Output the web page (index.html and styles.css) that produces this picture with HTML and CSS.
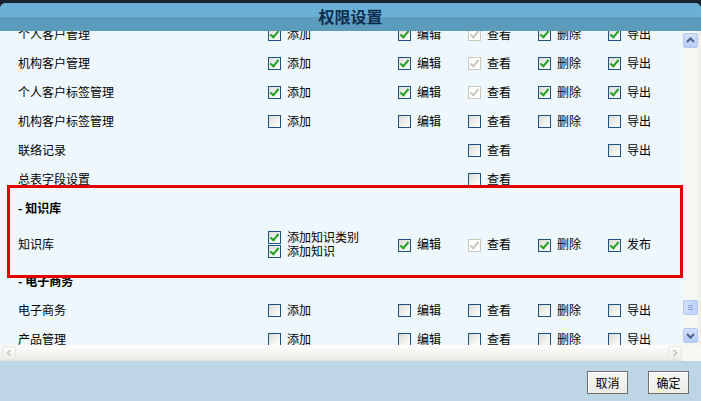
FILE: index.html
```html
<!DOCTYPE html>
<html lang="zh-CN">
<head>
  <meta charset="UTF-8" />
  <title>权限设置</title>
  <link rel="stylesheet" href="styles.css">
</head>
<body>
  <div class="dialog">
    <div class="titlebar">权限设置</div>
    <div class="main">
      <div class="viewport">
        <div class="perm-list">
          <div class="row">
            <span class="name">个人客户管理</span>
            <label class="opt"><span class="cb on"></span>添加</label>
            <label class="opt"><span class="cb on"></span>编辑</label>
            <label class="opt"><span class="cb on dis"></span>查看</label>
            <label class="opt"><span class="cb on"></span>删除</label>
            <label class="opt"><span class="cb on"></span>导出</label>
          </div>
          <div class="row">
            <span class="name">机构客户管理</span>
            <label class="opt"><span class="cb on"></span>添加</label>
            <label class="opt"><span class="cb on"></span>编辑</label>
            <label class="opt"><span class="cb on dis"></span>查看</label>
            <label class="opt"><span class="cb on"></span>删除</label>
            <label class="opt"><span class="cb on"></span>导出</label>
          </div>
          <div class="row">
            <span class="name">个人客户标签管理</span>
            <label class="opt"><span class="cb on"></span>添加</label>
            <label class="opt"><span class="cb on"></span>编辑</label>
            <label class="opt"><span class="cb on dis"></span>查看</label>
            <label class="opt"><span class="cb on"></span>删除</label>
            <label class="opt"><span class="cb on"></span>导出</label>
          </div>
          <div class="row">
            <span class="name">机构客户标签管理</span>
            <label class="opt"><span class="cb"></span>添加</label>
            <label class="opt"><span class="cb"></span>编辑</label>
            <label class="opt"><span class="cb"></span>查看</label>
            <label class="opt"><span class="cb"></span>删除</label>
            <label class="opt"><span class="cb"></span>导出</label>
          </div>
          <div class="row">
            <span class="name">联络记录</span>
            <span></span>
            <span></span>
            <label class="opt"><span class="cb"></span>查看</label>
            <span></span>
            <label class="opt"><span class="cb"></span>导出</label>
          </div>
          <div class="row">
            <span class="name">总表字段设置</span>
            <span></span>
            <span></span>
            <label class="opt"><span class="cb"></span>查看</label>
          </div>
          <div class="row group">- 知识库</div>
          <div class="row tall">
            <span class="name">知识库</span>
            <div class="stack">
              <label class="opt"><span class="cb on"></span>添加知识类别</label>
              <label class="opt"><span class="cb on"></span>添加知识</label>
            </div>
            <label class="opt"><span class="cb on"></span>编辑</label>
            <label class="opt"><span class="cb on dis"></span>查看</label>
            <label class="opt"><span class="cb on"></span>删除</label>
            <label class="opt"><span class="cb on"></span>发布</label>
          </div>
          <div class="row group">- 电子商务</div>
          <div class="row">
            <span class="name">电子商务</span>
            <label class="opt"><span class="cb"></span>添加</label>
            <label class="opt"><span class="cb"></span>编辑</label>
            <label class="opt"><span class="cb"></span>查看</label>
            <label class="opt"><span class="cb"></span>删除</label>
            <label class="opt"><span class="cb"></span>导出</label>
          </div>
          <div class="row">
            <span class="name">产品管理</span>
            <label class="opt"><span class="cb"></span>添加</label>
            <label class="opt"><span class="cb"></span>编辑</label>
            <label class="opt"><span class="cb"></span>查看</label>
            <label class="opt"><span class="cb"></span>删除</label>
            <label class="opt"><span class="cb"></span>导出</label>
          </div>
        </div>
      </div>
      <div class="vscroll">
        <div class="sb-btn">
          <svg width="13" height="13" viewBox="0 0 13 13"><path d="M3 8 L6.5 4.5 L10 8" fill="none" stroke="#4d6185" stroke-width="2"/></svg>
        </div>
        <div class="track">
          <div class="thumb">
            <svg width="13" height="13" viewBox="0 0 13 13"><path d="M4 4.5h5M4 6.5h5M4 8.5h5" stroke="#8ea3d6" stroke-width="1"/></svg>
          </div>
        </div>
        <div class="sb-btn">
          <svg width="13" height="13" viewBox="0 0 13 13"><path d="M3 5 L6.5 8.5 L10 5" fill="none" stroke="#4d6185" stroke-width="2"/></svg>
        </div>
      </div>
    </div>
    <div class="hscroll">
      <div class="sb-btn off">
        <svg width="12" height="12" viewBox="0 0 12 12"><path d="M7.5 3 L4.5 6 L7.5 9" fill="none" stroke="#c4c4bd" stroke-width="1.6"/></svg>
      </div>
      <div class="htrack"></div>
      <div class="sb-btn off">
        <svg width="12" height="12" viewBox="0 0 12 12"><path d="M4.5 3 L7.5 6 L4.5 9" fill="none" stroke="#c4c4bd" stroke-width="1.6"/></svg>
      </div>
      <div class="corner"></div>
    </div>
    <div class="footer">
      <button class="btn">取消</button>
      <button class="btn">确定</button>
    </div>
    <div class="mark"></div>
  </div>
</body>
</html>
```

FILE: styles.css
```css
* {
  margin: 0;
  padding: 0;
  box-sizing: border-box;
}
html, body {
  height: 100%;
  overflow: hidden;
}
body {
  background: #16232f;
  font-family: "Noto Sans CJK SC", sans-serif;
  font-size: 12px;
  color: #000;
}
.dialog {
  position: relative;
  width: 701px;
  height: 398px;
  margin-top: 3px;
  display: flex;
  flex-direction: column;
  background: #bdd5e4;
  border-radius: 6px 6px 0 0;
  overflow: hidden;
}
.titlebar {
  height: 28px;
  flex: 0 0 28px;
  background: linear-gradient(to bottom, #6aafd5 0, #6aafd5 50%, #5b9bbc 50%, #5b9bbc 100%);
  color: #0c2d4f;
  font-size: 16px;
  font-weight: bold;
  text-align: center;
  line-height: 26px;
}
.main {
  display: flex;
  height: 314px;
  flex: 0 0 314px;
}
.viewport {
  flex: 1;
  overflow: hidden;
  background: #eef7fd;
}
.perm-list {
  margin-top: -12px;
}
.row {
  display: grid;
  grid-template-columns: 250px 130px 70px 70px 70px 70px;
  align-items: center;
  height: 29px;
  padding-left: 18px;
  line-height: 14px;
}
.row.tall {
  height: 44px;
}
.row.group {
  display: block;
  line-height: 29px;
  font-weight: bold;
}
.stack {
  display: flex;
  flex-direction: column;
}
.opt {
  display: flex;
  align-items: center;
  gap: 6px;
  white-space: nowrap;
}
.cb {
  position: relative;
  width: 13px;
  height: 13px;
  flex: 0 0 13px;
  margin-top: 2px;
  border: 1px solid #1c5180;
  background: linear-gradient(135deg, #dcdcd6, #ffffff);
}
.stack .cb {
  margin-top: 1px;
}
.cb.on::after {
  content: '';
  position: absolute;
  left: 3px;
  top: 0;
  width: 3px;
  height: 7px;
  border: solid #21a121;
  border-width: 0 2px 2px 0;
  transform: rotate(40deg);
}
.cb.dis {
  border-color: #cac8bb;
  background: #fff;
}
.cb.dis::after {
  border-color: #cac8bb;
}
.vscroll {
  width: 18px;
  flex: 0 0 18px;
  display: flex;
  flex-direction: column;
  align-items: center;
  padding: 2px 0;
  background: #f7f7f3;
  border-right: 3px solid #eeeeea;
}
.sb-btn {
  width: 15px;
  height: 15px;
  flex: 0 0 15px;
  display: flex;
  align-items: center;
  justify-content: center;
  border: 1px solid #b4c8f2;
  border-radius: 2px;
  background: linear-gradient(to bottom, #d2e0fc, #b8ccf7);
}
.sb-btn.off {
  width: 14px;
  height: 14px;
  flex: 0 0 14px;
  border-color: #e6e5de;
  background: linear-gradient(to bottom, #fbfbf8, #efeee8);
}
.track {
  flex: 1;
  display: flex;
  flex-direction: column;
  justify-content: flex-end;
  padding-bottom: 13px;
}
.thumb {
  width: 15px;
  height: 15px;
  display: flex;
  align-items: center;
  justify-content: center;
  border: 1px solid #b4c8f2;
  border-radius: 2px;
  background: linear-gradient(to right, #d2e0fc, #bed0f8);
}
.hscroll {
  height: 16px;
  flex: 0 0 16px;
  display: flex;
  align-items: center;
  padding-left: 2px;
  background: linear-gradient(to bottom, #fefefc, #ecebe5);
  border-bottom: 1px solid #e2e1da;
}
.htrack {
  flex: 1;
}
.corner {
  width: 19px;
  height: 16px;
  background: #f7f7f3;
}
.footer {
  flex: 1;
  display: flex;
  justify-content: flex-end;
  align-items: flex-start;
  gap: 20px;
  padding: 10px 12px 0 0;
  background: #bdd5e4;
}
.btn {
  width: 41px;
  height: 23px;
  font-family: "Noto Sans CJK SC", sans-serif;
  font-size: 12px;
  color: #000;
  background: linear-gradient(to bottom, #f6f6f4, #ebebe8);
  border: 1px solid #6e6e6e;
  box-shadow: inset 1px 1px 0 #fff;
}
.mark {
  position: absolute;
  left: 7px;
  top: 182px;
  width: 676px;
  height: 93px;
  border: 3px solid #e20000;
}
```
